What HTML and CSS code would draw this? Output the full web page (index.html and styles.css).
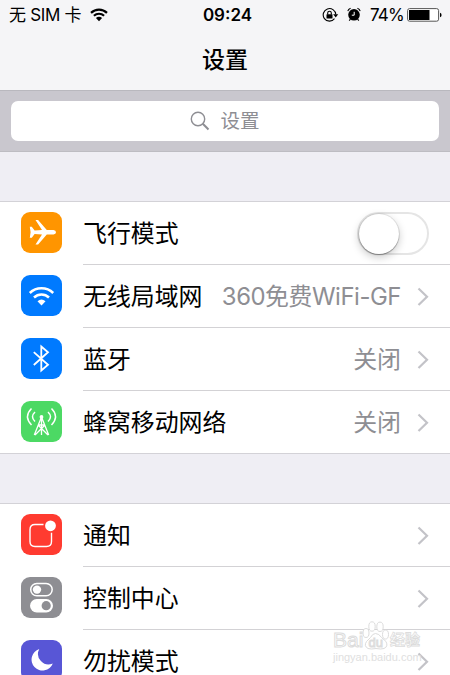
FILE: index.html
```
<!DOCTYPE html>
<html lang="zh-CN">
<head>
    <meta charset="UTF-8">
    <meta name="viewport" content="width=device-width, initial-scale=1.0">
    <title>设置</title>
    <link rel="stylesheet" href="styles.css">
</head>
<body>
    <header class="navbar">
        <div class="status-bar">
            <div class="carrier">
                <span>无 SIM 卡</span>
                <svg class="wifi" width="18" height="14" viewBox="0 0 18 14">
                    <path d="M1 4.9C5.5 .6 12.5 .6 17 4.9" fill="none" stroke="#000" stroke-width="2.2"/>
                    <path d="M3.9 7.8C6.8 5 11.2 5 14.1 7.8" fill="none" stroke="#000" stroke-width="2.1"/>
                    <path d="M5.9 10C7.7 8.3 10.3 8.3 12.1 10L9 13.2z"/>
                </svg>
            </div>
            <div class="time">09:24</div>
            <div class="indicators">
                <svg class="lock" width="17" height="16" viewBox="0 0 17 16">
                    <path d="M12.5 11.7A6.3 6.3 0 1 1 13.8 7.5" fill="none" stroke="#000" stroke-width="1.1"/>
                    <path d="M11.2 7.3h5l-2.5 3.2z"/>
                    <rect x="4.5" y="7.3" width="6" height="4.2" rx=".5"/>
                    <path d="M5.7 7.5V6a1.8 1.8 0 0 1 3.6 0v1.5" fill="none" stroke="#000" stroke-width="1.1"/>
                </svg>
                <svg class="alarm" width="14" height="15" viewBox="0 0 14 15">
                    <circle cx="7" cy="7.8" r="5.8"/>
                    <path d="M.8 4.2A4 4 0 0 1 3.6 1.3M10.4 1.3A4 4 0 0 1 13.2 4.2M3.5 12l-1.3 1.7M10.5 12l1.3 1.7" fill="none" stroke="#000" stroke-width="1.1"/>
                    <path d="M7.2 4.8v3.4H4.8" fill="none" stroke="#fff" stroke-width="1"/>
                </svg>
                <span class="percent">74%</span>
                <svg class="battery" width="35" height="14" viewBox="0 0 35 14">
                    <rect x=".6" y=".6" width="31" height="12.6" rx="2" fill="#fff" stroke="#555" stroke-width="1"/>
                    <rect x="2" y="2" width="20.5" height="10"/>
                    <path d="M33 4.8q1.6.5 1.6 2.2T33 9.2z"/>
                </svg>
            </div>
        </div>
        <h1>设置</h1>
    </header>

    <div class="search-bar">
        <div class="search-field">
            <svg width="20" height="20" viewBox="0 0 20 20" fill="none" stroke="#8e8e93">
                <circle cx="8" cy="8" r="6.7" stroke-width="1.4"/>
                <path d="M12.8 12.8l5.7 5.7" stroke-width="2"/>
            </svg>
            <span>设置</span>
        </div>
    </div>

    <div class="group">
        <div class="row">
            <svg class="icon orange" viewBox="0 0 41 41">
                <path fill="#fff" d="M8.8 14.8h2l2.8 3.6 7.4-.4-6.5-10h2.6l8.7 10h6.7q2.5.3 2.5 2.2t-2.5 2.2h-6.7l-8.7 10h-2.6l6.500-10-7.400-.4-2.800 3.700h-2l.8-5.500z"/>
            </svg>
            <div class="cell">
                <span class="label">飞行模式</span>
                <div class="switch"><div class="knob"></div></div>
            </div>
        </div>
        <div class="row">
            <svg class="icon blue" viewBox="0 0 41 41">
                <g fill="none" stroke="#fff" stroke-width="2.5">
                    <path d="M8.8 18C15.2 11.800 25.800 11.800 32.200 18"/>
                    <path d="M13 22.500C17.200 18.500 23.800 18.500 28 22.500"/>
                </g>
                <path fill="#fff" d="M16.500 26.200q4-3.400 8 0l-4 4.300z"/>
            </svg>
            <div class="cell">
                <span class="label">无线局域网</span>
                <span class="value wide">360免费WiFi-GF</span>
                <svg class="chevron" viewBox="0 0 12 20"><path d="M1.5 1.5L10 9.7 1.5 18"/></svg>
            </div>
        </div>
        <div class="row">
            <svg class="icon blue" viewBox="0 0 41 41">
                <path fill="none" stroke="#fff" stroke-width="1.8" d="M12.8 14.2L27 26.8l-6.700 5.700v-24L27 14.200 12.800 27"/>
            </svg>
            <div class="cell">
                <span class="label">蓝牙</span>
                <span class="value">关闭</span>
                <svg class="chevron" viewBox="0 0 12 20"><path d="M1.5 1.5L10 9.7 1.5 18"/></svg>
            </div>
        </div>
        <div class="row">
            <svg class="icon green" viewBox="0 0 41 41">
                <g fill="none" stroke="#fff" stroke-width="1.5">
                    <path d="M10.5 7.5Q2.5 15.5 10.5 24M30.5 7.5Q38.5 15.5 30.5 24"/>
                    <path d="M14 11Q9 15.7 14 20.5M27 11Q32 15.7 27 20.5"/>
                    <path d="M20.5 16l-7.2 18M20.5 16l7.2 18M20.5 16v18M17.5 24h6M17.5 24.5l9.5 9.5M23.5 24.5L14 34" stroke-width="1.3"/>
                </g>
                <circle cx="20.5" cy="16" r="1.9" fill="#fff"/>
            </svg>
            <div class="cell">
                <span class="label">蜂窝移动网络</span>
                <span class="value">关闭</span>
                <svg class="chevron" viewBox="0 0 12 20"><path d="M1.5 1.5L10 9.7 1.5 18"/></svg>
            </div>
        </div>
    </div>

    <div class="group">
        <div class="row">
            <svg class="icon red" viewBox="0 0 41 41">
                <path d="M22.5 10.5H14q-5 0-5 5V27.5q0 5 5 5H25.5q5 0 5-5V18.8" fill="none" stroke="#fff" stroke-width="1.4"/>
                <circle cx="29.5" cy="11.8" r="5.4" fill="#fff"/>
            </svg>
            <div class="cell">
                <span class="label">通知</span>
                <svg class="chevron" viewBox="0 0 12 20"><path d="M1.5 1.5L10 9.7 1.5 18"/></svg>
            </div>
        </div>
        <div class="row">
            <svg class="icon gray" viewBox="0 0 41 41">
                <rect x="9.7" y="6.5" width="21.5" height="12.2" rx="6.1" fill="none" stroke="#fff" stroke-width="1.5"/>
                <circle cx="16" cy="12.6" r="4.2" fill="#fff"/>
                <rect x="9" y="22" width="23" height="13.5" rx="6.75" fill="#fff"/>
                <circle cx="25.2" cy="28.7" r="4.6" fill="#8e8e93"/>
            </svg>
            <div class="cell">
                <span class="label">控制中心</span>
                <svg class="chevron" viewBox="0 0 12 20"><path d="M1.5 1.5L10 9.7 1.5 18"/></svg>
            </div>
        </div>
        <div class="row">
            <svg class="icon purple" viewBox="0 0 41 41">
                <path fill="#fff" d="M18.3 9A11 11 0 1 0 31.8 23.5 10.5 10.5 0 0 1 18.3 9z"/>
            </svg>
            <div class="cell">
                <span class="label">勿扰模式</span>
                <svg class="chevron" viewBox="0 0 12 20"><path d="M1.5 1.5L10 9.7 1.5 18"/></svg>
            </div>
        </div>
    </div>

    <div class="watermark">
        <div class="brand">
            <span class="bai">Bai</span>
            <svg width="28" height="29" viewBox="0 0 28 29" fill="#fff" stroke="#dcdcdc">
                <ellipse cx="4" cy="12" rx="3" ry="4.5"/>
                <ellipse cx="10" cy="5.5" rx="3.2" ry="4.7"/>
                <ellipse cx="18" cy="5.8" rx="3.2" ry="4.7"/>
                <ellipse cx="23.5" cy="13.5" rx="3" ry="4.5"/>
                <path d="M13.5 12.500q3.500 0 6 4l4.500 4q2.500 5-2 7-3 1-8 0-5 1-8 0-4.500-2.500-1.500-7l4-4q2-4 5-4z"/>
                <text x="6.5" y="26" class="du">du</text>
            </svg>
            <span class="jy">经验</span>
        </div>
        <div class="site">jingyan.baidu.com</div>
    </div>
</body>
</html>
```
FILE: styles.css
```
* {
    box-sizing: border-box;
}
body {
    margin: 0;
    height: 675px;
    overflow: hidden;
    position: relative;
    font-family: Inter, "Noto Sans CJK SC", sans-serif;
    background-color: #efeef4;
    color: #000;
}
svg {
    display: block;
    flex: none;
}
.navbar {
    height: 91px;
    background: #f5f5f7;
    border-bottom: 1px solid #b9b8be;
}
.status-bar {
    display: grid;
    grid-template-columns: 181px 75px 1fr;
    align-items: center;
    height: 29px;
    padding: 0 8px 0 9px;
    font-size: 17px;
    line-height: 28px;
}
.carrier, .indicators {
    display: flex;
    align-items: center;
}
.carrier span {
    width: 81px;
    white-space: nowrap;
    letter-spacing: -0.3px;
}
.time {
    text-align: center;
    font-weight: 600;
    font-size: 17px;
}
.indicators {
    justify-content: flex-end;
}
.lock {
    margin-right: 8px;
}
.alarm {
    margin-right: 9px;
}
.percent {
    width: 37px;
    letter-spacing: -0.8px;
}
h1 {
    margin: 0;
    text-align: center;
    font-size: 23px;
    line-height: 62px;
    font-weight: 500;
}
.search-bar {
    height: 61px;
    padding: 10px 11px;
    background: #c9c7ce;
    border-bottom: 1px solid #bdbcc2;
}
.search-field {
    display: flex;
    align-items: center;
    justify-content: center;
    gap: 10px;
    height: 40px;
    background: #fff;
    border-radius: 7px;
    color: #8e8e93;
    font-size: 19.5px;
}
.search-field span {
    padding-bottom: 3px;
}
.group {
    margin-top: 49px;
    background: #fff;
    border-top: 1px solid #d3d2d7;
}
.row {
    display: flex;
    height: 63px;
    padding-left: 21px;
}
.row:last-child {
    border-bottom: 1px solid #d3d2d7;
}
.icon {
    width: 41px;
    height: 41px;
    margin: 9.5px 21px 0 0;
    border-radius: 9px;
}
.orange { background: #ff9500; }
.blue { background: #007aff; }
.green { background: #4cd964; }
.red { background: #ff3b30; }
.gray { background: #8e8e93; }
.purple { background: #5856d6; }
.cell {
    flex: 1;
    display: flex;
    align-items: center;
    padding: 1px 21px 0 0;
    border-bottom: 1px solid #d3d2d5;
    font-size: 23.9px;
    line-height: 60px;
    white-space: nowrap;
}
.row:last-child .cell {
    border-bottom: 0;
}
.label {
    flex: 1;
}
.value {
    color: #8e8e93;
    margin-right: 16px;
}
.wide {
    letter-spacing: -0.45px;
}
.chevron {
    width: 12px;
    height: 20px;
    fill: none;
    stroke: #c3c3c8;
    stroke-width: 2.2;
}
.switch {
    width: 72px;
    height: 43px;
    margin-top: -1px;
    border: 2px solid #e5e5e5;
    border-radius: 22px;
}
.knob {
    width: 40px;
    height: 40px;
    border-radius: 50%;
    background: #fff;
    box-shadow: 0 0 0 1px rgba(0, 0, 0, 0.08), 0 1px 1px rgba(0, 0, 0, 0.3), 0 3px 8px rgba(0, 0, 0, 0.22);
}
.watermark {
    position: absolute;
    left: 333px;
    top: 620px;
    color: #fff;
    font-family: "Liberation Sans", "Noto Sans CJK SC", sans-serif;
    -webkit-text-stroke: 1px #dcdcdc;
}
.brand {
    display: flex;
    align-items: flex-end;
    height: 30px;
}
.bai {
    font-size: 21px;
    line-height: 20px;
    width: 29px;
}
.jy {
    font-size: 15px;
    line-height: 20px;
    font-weight: 700;
    -webkit-text-stroke-width: 0.8px;
}
.du {
    font-size: 13px;
    -webkit-text-stroke-width: 0.7px;
}
.site {
    font-size: 11px;
    line-height: 14px;
    color: #e0e0e0;
    -webkit-text-stroke-width: 0;
}
```
